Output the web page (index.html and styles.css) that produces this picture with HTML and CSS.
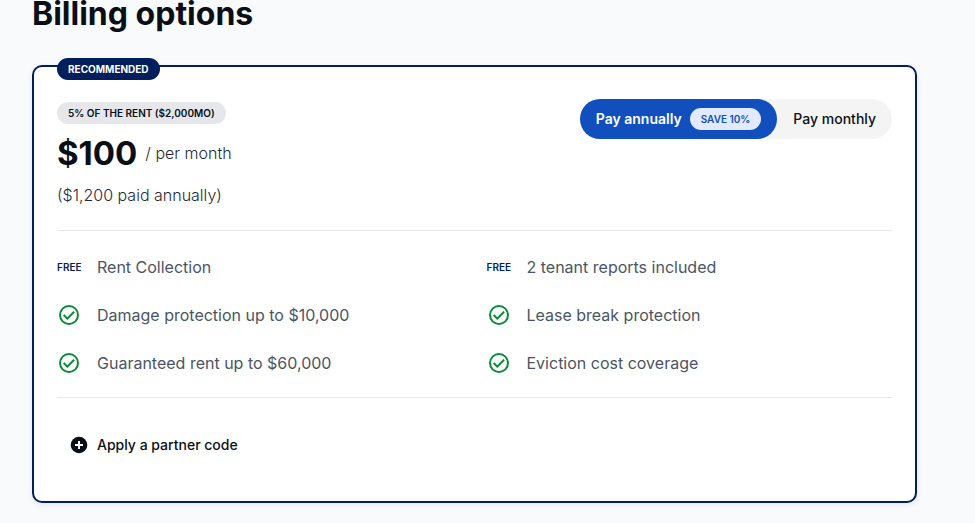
FILE: index.html
```
<!DOCTYPE html>
<html lang="en">
<head>
    <meta charset="UTF-8">
    <meta name="viewport" content="width=device-width, initial-scale=1.0">
    <title>Billing options</title>
    <link rel="stylesheet" href="styles.css">
</head>
<body>
    <main class="page">
        <h1>Billing options</h1>

        <section class="card">
            <span class="badge recommended">RECOMMENDED</span>

            <div class="card-header">
                <div class="pricing">
                    <span class="badge rate">5% OF THE RENT ($2,000MO)</span>
                    <p class="price"><strong>$100</strong> <span>/ per month</span></p>
                    <p class="total">($1,200 paid annually)</p>
                </div>

                <div class="toggle">
                    <button type="button" class="active">Pay annually <span class="badge save">SAVE 10%</span></button>
                    <button type="button">Pay monthly</button>
                </div>
            </div>

            <ul class="features">
                <li><span class="free">FREE</span> Rent Collection</li>
                <li><span class="free">FREE</span> 2 tenant reports included</li>
                <li>
                    <svg class="check" viewBox="0 0 24 24"><circle cx="12" cy="12" r="9"/><path d="M6.700 12l3.600 3.600 6.800-6.800"/></svg>
                    Damage protection up to $10,000
                </li>
                <li>
                    <svg class="check" viewBox="0 0 24 24"><circle cx="12" cy="12" r="9"/><path d="M6.700 12l3.600 3.600 6.800-6.800"/></svg>
                    Lease break protection
                </li>
                <li>
                    <svg class="check" viewBox="0 0 24 24"><circle cx="12" cy="12" r="9"/><path d="M6.700 12l3.600 3.600 6.800-6.800"/></svg>
                    Guaranteed rent up to $60,000
                </li>
                <li>
                    <svg class="check" viewBox="0 0 24 24"><circle cx="12" cy="12" r="9"/><path d="M6.700 12l3.600 3.600 6.800-6.800"/></svg>
                    Eviction cost coverage
                </li>
            </ul>

            <button type="button" class="partner-code">
                <svg viewBox="0 0 18 18"><circle cx="9" cy="9" r="8.300"/><path d="M9 5v8M5 9h8"/></svg>
                Apply a partner code
            </button>
        </section>
    </main>
</body>
</html>
```
FILE: styles.css
```
* {
    box-sizing: border-box;
}
body {
    margin: 0;
    background: #f9fafc;
    color: #0a0f16;
    font-family: Inter, sans-serif;
    font-size: 16px;
    font-weight: 300;
    line-height: 24px;
}
h1, p, ul {
    margin: 0;
    padding: 0;
}
button {
    border: none;
    background: none;
    color: inherit;
    font: inherit;
    font-weight: 500;
    cursor: pointer;
}
.page {
    padding: 0 58px 20px 32px;
}
h1 {
    margin-bottom: 37px;
    font-size: 32px;
    font-weight: 700;
    line-height: 28px;
}
.card {
    position: relative;
    padding: 32px 23px 36px;
    background: #fff;
    border: 2px solid #001f5c;
    border-radius: 10px;
    box-shadow: 0 2px 6px rgba(0, 31, 92, 0.08);
}
.badge {
    display: inline-block;
    padding: 0 11px;
    border-radius: 11px;
    font-size: 10px;
    font-weight: 600;
    line-height: 22px;
    white-space: nowrap;
}
.recommended {
    position: absolute;
    top: -9px;
    left: 23px;
    background: #001f5c;
    color: #fff;
    font-weight: 700;
}
.card-header {
    display: flex;
    justify-content: space-between;
    align-items: flex-start;
    padding-bottom: 23px;
    border-bottom: 1px solid #e5e7eb;
}
.pricing {
    display: flex;
    flex-direction: column;
    align-items: flex-start;
    padding-top: 3px;
}
.rate {
    background: #e5e7eb;
}
.price {
    display: flex;
    align-items: center;
    gap: 8px;
    margin: 9px 0 10px;
    color: #1f2937;
    line-height: 40px;
}
.price strong {
    color: #0a0f16;
    font-size: 33px;
    font-weight: 700;
}
.total {
    color: #1f2937;
}
.toggle {
    display: flex;
    border-radius: 20px;
    background: #f4f4f4;
}
.toggle button {
    display: flex;
    align-items: center;
    gap: 8px;
    height: 40px;
    padding: 0 16px;
    border-radius: 20px;
    font-size: 14px;
}
.toggle .active {
    background: #104fbd;
    color: #fff;
    font-weight: 600;
}
.save {
    background: #e1eaff;
    color: #104fbd;
}
.features {
    display: grid;
    grid-template-columns: 1fr 1fr;
    gap: 24px;
    padding: 24px 0 22px;
    border-bottom: 1px solid #e5e7eb;
    color: #4b5563;
    font-weight: 400;
    list-style: none;
}
.features li {
    display: flex;
    align-items: center;
    gap: 16px;
}
.free {
    width: 24px;
    color: #001f5c;
    font-size: 10px;
    font-weight: 600;
}
.check {
    width: 24px;
    height: 24px;
    fill: none;
    stroke: #0b8a3a;
    stroke-width: 2;
}
.partner-code {
    display: flex;
    align-items: center;
    gap: 9px;
    margin-top: 27px;
    padding: 8px 13px;
    font-size: 14px;
}
.partner-code svg {
    width: 18px;
    height: 18px;
    fill: #0a0f16;
}
.partner-code path {
    stroke: #fff;
    stroke-width: 2;
}
```
